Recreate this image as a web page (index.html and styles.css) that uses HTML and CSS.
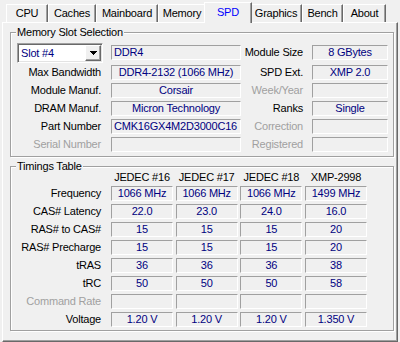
FILE: index.html
```html
<!DOCTYPE html>
<html lang="en">
<head>
  <meta charset="utf-8">
  <title>CPU-Z - SPD</title>
  <link rel="stylesheet" href="styles.css">
</head>
<body>

  <ul class="tabs">
    <li class="tab tab-cpu">CPU</li>
    <li class="tab tab-caches">Caches</li>
    <li class="tab tab-mainboard">Mainboard</li>
    <li class="tab tab-memory">Memory</li>
    <li class="tab tab-spd active">SPD</li>
    <li class="tab tab-graphics">Graphics</li>
    <li class="tab tab-bench">Bench</li>
    <li class="tab tab-about">About</li>
  </ul>

  <div class="panel">
    <fieldset class="group slot">
      <legend>Memory Slot Selection</legend>
      <div class="slot-grid">
        <div class="combo">
          <span>Slot #4</span>
          <span class="combo-btn"><svg width="7" height="4" viewBox="0 0 7 4"><path d="M0 0h7L3.5 4z" shape-rendering="crispEdges"/></svg></span>
        </div>
        <div class="field left">DDR4</div>
        <div class="label">Module Size</div>
        <div class="field">8 GBytes</div>

        <div class="label">Max Bandwidth</div>
        <div class="field">DDR4-2132 (1066 MHz)</div>
        <div class="label">SPD Ext.</div>
        <div class="field">XMP 2.0</div>

        <div class="label">Module Manuf.</div>
        <div class="field">Corsair</div>
        <div class="label off">Week/Year</div>
        <div class="field"></div>

        <div class="label">DRAM Manuf.</div>
        <div class="field">Micron Technology</div>
        <div class="label">Ranks</div>
        <div class="field">Single</div>

        <div class="label">Part Number</div>
        <div class="field left">CMK16GX4M2D3000C16</div>
        <div class="label off">Correction</div>
        <div class="field"></div>

        <div class="label off">Serial Number</div>
        <div class="field"></div>
        <div class="label off">Registered</div>
        <div class="field"></div>
      </div>
    </fieldset>

    <fieldset class="group timings">
      <legend>Timings Table</legend>
      <div class="timing-grid">
        <div></div>
        <div class="col-head">JEDEC #16</div>
        <div class="col-head">JEDEC #17</div>
        <div class="col-head">JEDEC #18</div>
        <div class="col-head">XMP-2998</div>

        <div class="label">Frequency</div>
        <div class="field">1066 MHz</div>
        <div class="field">1066 MHz</div>
        <div class="field">1066 MHz</div>
        <div class="field">1499 MHz</div>

        <div class="label">CAS# Latency</div>
        <div class="field">22.0</div>
        <div class="field">23.0</div>
        <div class="field">24.0</div>
        <div class="field">16.0</div>

        <div class="label">RAS# to CAS#</div>
        <div class="field">15</div>
        <div class="field">15</div>
        <div class="field">15</div>
        <div class="field">20</div>

        <div class="label">RAS# Precharge</div>
        <div class="field">15</div>
        <div class="field">15</div>
        <div class="field">15</div>
        <div class="field">20</div>

        <div class="label">tRAS</div>
        <div class="field">36</div>
        <div class="field">36</div>
        <div class="field">36</div>
        <div class="field">38</div>

        <div class="label">tRC</div>
        <div class="field">50</div>
        <div class="field">50</div>
        <div class="field">50</div>
        <div class="field">58</div>

        <div class="label off">Command Rate</div>
        <div class="field"></div>
        <div class="field"></div>
        <div class="field"></div>
        <div class="field"></div>

        <div class="label">Voltage</div>
        <div class="field">1.20 V</div>
        <div class="field">1.20 V</div>
        <div class="field">1.20 V</div>
        <div class="field">1.350 V</div>
      </div>
    </fieldset>
  </div>

</body>
</html>
```

FILE: styles.css
```css
:root {
  --face:   #f0f0f0;
  --shadow: #a0a0a0;
  --dark:   #696969;
  --light:  #ffffff;
  --value:  #000080;
  --off:    #a0a0a0;
}
* { box-sizing:border-box; }
body {
  margin:0;
  background:var(--face);
  font-family:"Liberation Sans", Arial, sans-serif;
  font-size:11px;
  letter-spacing:-0.2px;
  color:#000;
  overflow:hidden;
}

/* onglets */
.tabs {
  display:flex; align-items:flex-end;
  height:22px; margin:0; padding:0 0 0 6px;
  list-style:none;
}
.tab {
  height:18px; line-height:17px; text-align:center;
  border:1px solid var(--light); border-right-color:var(--dark); border-bottom:none;
  box-shadow:inset -1px 0 var(--shadow);
  white-space:nowrap;
}
.tab-cpu { width:42px; }
.tab-caches { width:48px; }
.tab-mainboard { width:62px; }
.tab-memory { width:48px; }
.tab-spd { width:44px; }
.tab-graphics { width:52px; }
.tab-bench { width:41px; }
.tab-about { width:43px; }
.tab.active {
  position:relative; z-index:1;
  width:48px; height:21px; margin:0 -2px -1px;
  line-height:18px; padding-bottom:2px;
  background:var(--face); color:#0000ff;
}

/* panneau */
.panel {
  height:320px; margin:0 2px;
  padding:0 0 0 7px;
  border:1px solid var(--light);
  border-right-color:var(--dark); border-bottom-color:var(--dark);
  box-shadow:inset -1px -1px var(--shadow);
}
.group {
  width:384px; min-width:0;
  margin:4px 0 0; padding:5px 6px 4px;
  border:1px solid var(--shadow);
  box-shadow:inset 1px 1px var(--light), 1px 1px var(--light);
}
.group legend {
  padding:0 1px; margin-left:-1px;
  line-height:11px; background:var(--face);
}
.group.timings { padding-top:0; padding-bottom:3px; }

.label {
  text-align:right; padding-right:10px;
  line-height:13px; white-space:nowrap;
}
.label.off { color:var(--off); }
.field {
  height:15px; line-height:13px;
  text-align:center; color:var(--value);
  white-space:nowrap; overflow:hidden;
  border:1px solid; border-color:var(--shadow) var(--light) var(--light) var(--shadow);
}
.field.left { text-align:left; padding-left:2px; }

/* selection du slot */
.slot-grid {
  display:grid;
  grid-template-columns:94px 130px 71px 76px;
  grid-template-rows:19px repeat(5, 15px);
  row-gap:3px; align-items:center;
}
.slot-grid .label:nth-child(4n+3) { padding-right:9px; }
.combo {
  align-self:start;
  display:flex; align-items:center; justify-content:space-between;
  width:86px; height:20px; padding-left:3px;
  background:#fff; color:var(--value);
  border:1px solid; border-color:var(--shadow) var(--light) var(--light) var(--shadow);
  box-shadow:inset 1px 1px var(--dark), inset -1px -1px #e3e3e3;
}
.combo-btn {
  display:flex; align-items:center; justify-content:center;
  width:16px; height:16px; margin-right:1px;
  background:var(--face);
  border:1px solid; border-color:var(--light) var(--dark) var(--dark) var(--light);
  box-shadow:inset -1px -1px var(--shadow);
}

/* tableau des timings */
.timing-grid {
  display:grid;
  grid-template-columns:94px repeat(4, 64.67px);
  grid-template-rows:11px repeat(8, 15px);
  row-gap:3px; align-items:center;
}
.timing-grid .field { width:62px; }
.col-head { width:62px; text-align:center; line-height:11px; white-space:nowrap; }
```
